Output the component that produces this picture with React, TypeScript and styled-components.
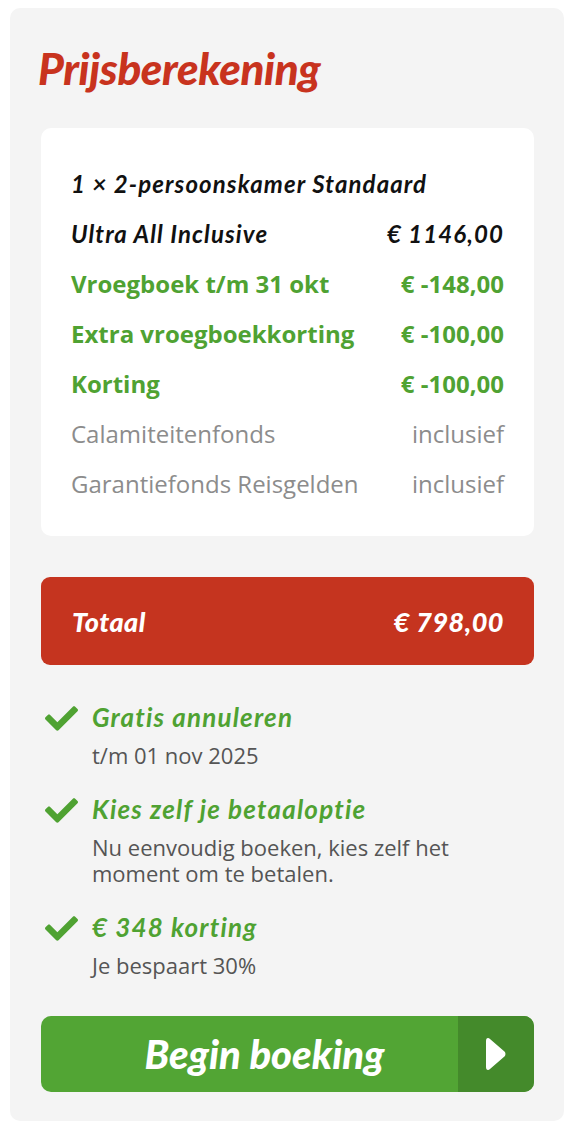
import React from 'react';
import styled, { createGlobalStyle } from 'styled-components';
import { FaCheck } from 'react-icons/fa';

const GlobalStyle = createGlobalStyle`
  body {
    margin: 0;
    background: #ffffff;
    font-family: 'Open Sans', 'Liberation Sans', sans-serif;
  }
`;

const display = `'Lato', 'Open Sans', sans-serif`;

const Panel = styled.aside`
  box-sizing: border-box;
  width: 554px;
  margin: 8px 10px;
  padding: 35px 30px 29px 31px;
  background: #f4f4f4;
  border-radius: 10px;
`;

const Title = styled.h2`
  margin: 0 0 35px -3px;
  font-family: ${display};
  font-style: italic;
  font-weight: 900;
  font-size: 44px;
  line-height: 50px;
  letter-spacing: -0.4px;
  color: #c8331e;
`;

const PriceBox = styled.div`
  background: #ffffff;
  border-radius: 10px;
  padding: 30px 30px 28px 30px;
`;

type Tone = 'main' | 'discount' | 'muted';

const Row = styled.div<{ $tone: Tone }>`
  display: flex;
  justify-content: space-between;
  align-items: center;
  height: 50px;
  white-space: nowrap;
  font-size: 24px;
  ${({ $tone }) =>
    $tone === 'main'
      ? `font-family: ${display}; font-style: italic; font-weight: 700; letter-spacing: 1.1px; color: #111;`
      : $tone === 'discount'
      ? `font-family: 'Open Sans', sans-serif; font-weight: 700; color: #4fa232;`
      : `font-family: 'Open Sans', sans-serif; font-weight: 400; color: #8c8c8c;`}
`;

const TotalBar = styled.div`
  display: flex;
  justify-content: space-between;
  align-items: center;
  height: 88px;
  margin-top: 41px;
  padding: 0 30px 0 31px;
  background: #c5341f;
  border-radius: 9px;
  color: #ffffff;
  font-family: ${display};
  font-style: italic;
  font-weight: 900;
  font-size: 27px;
  letter-spacing: 0.5px;
`;

const Perks = styled.ul`
  list-style: none;
  margin: 37px 0 0;
  padding: 0;
  display: flex;
  flex-direction: column;
  gap: 26px;
`;

const Perk = styled.li`
  display: flex;
  gap: 14px;
  padding-left: 4px;
`;

const CheckIcon = styled(FaCheck)`
  flex: none;
  width: 33px;
  height: 33px;
  color: #4fa232;
`;

const PerkTitle = styled.div`
  font-family: ${display};
  font-style: italic;
  font-weight: 700;
  font-size: 26px;
  line-height: 30px;
  letter-spacing: 1.2px;
  color: #4fa232;
`;

const PerkText = styled.div`
  margin-top: 10px;
  max-width: 400px;
  font-size: 22px;
  line-height: 26px;
  color: #555555;
`;

const BookButton = styled.button`
  display: flex;
  width: 100%;
  height: 76px;
  margin-top: 38px;
  padding: 0;
  border: none;
  border-radius: 10px;
  overflow: hidden;
  background: #52a534;
  cursor: pointer;
`;

const BookLabel = styled.span`
  flex: 1;
  display: flex;
  align-items: center;
  justify-content: center;
  padding-left: 30px;
  color: #ffffff;
  font-family: ${display};
  font-style: italic;
  font-weight: 900;
  font-size: 40px;
`;

const ArrowCell = styled.span`
  flex: none;
  width: 76px;
  display: flex;
  align-items: center;
  justify-content: center;
  background: #448a2b;
`;

const rows: { label: string; value?: string; tone: Tone }[] = [
  { label: '1 × 2-persoonskamer Standaard', tone: 'main' },
  { label: 'Ultra All Inclusive', value: '€ 1146,00', tone: 'main' },
  { label: 'Vroegboek t/m 31 okt', value: '€ -148,00', tone: 'discount' },
  { label: 'Extra vroegboekkorting', value: '€ -100,00', tone: 'discount' },
  { label: 'Korting', value: '€ -100,00', tone: 'discount' },
  { label: 'Calamiteitenfonds', value: 'inclusief', tone: 'muted' },
  { label: 'Garantiefonds Reisgelden', value: 'inclusief', tone: 'muted' },
];

const perks = [
  { title: 'Gratis annuleren', text: 't/m 01 nov 2025' },
  {
    title: 'Kies zelf je betaaloptie',
    text: 'Nu eenvoudig boeken, kies zelf het moment om te betalen.',
  },
  { title: '€ 348 korting', text: 'Je bespaart 30%' },
];

export default function App() {
  return (
    <>
      <GlobalStyle />
      <Panel>
        <Title>Prijsberekening</Title>
        <PriceBox>
          {rows.map((r) => (
            <Row key={r.label} $tone={r.tone}>
              <span>{r.label}</span>
              {r.value && <span>{r.value}</span>}
            </Row>
          ))}
        </PriceBox>
        <TotalBar>
          <span>Totaal</span>
          <span>€ 798,00</span>
        </TotalBar>
        <Perks>
          {perks.map((p) => (
            <Perk key={p.title}>
              <CheckIcon />
              <div>
                <PerkTitle>{p.title}</PerkTitle>
                <PerkText>{p.text}</PerkText>
              </div>
            </Perk>
          ))}
        </Perks>
        <BookButton>
          <BookLabel>Begin boeking</BookLabel>
          <ArrowCell>
            <svg width="22" height="36" viewBox="0 0 22 36">
              <path
                d="M3 2 Q1 2 1 5 L1 31 Q1 34 3 34 Q4 34 5 33 L20 20 Q21 18 20 16 L5 3 Q4 2 3 2 Z"
                fill="#ffffff"
              />
            </svg>
          </ArrowCell>
        </BookButton>
      </Panel>
    </>
  );
}
